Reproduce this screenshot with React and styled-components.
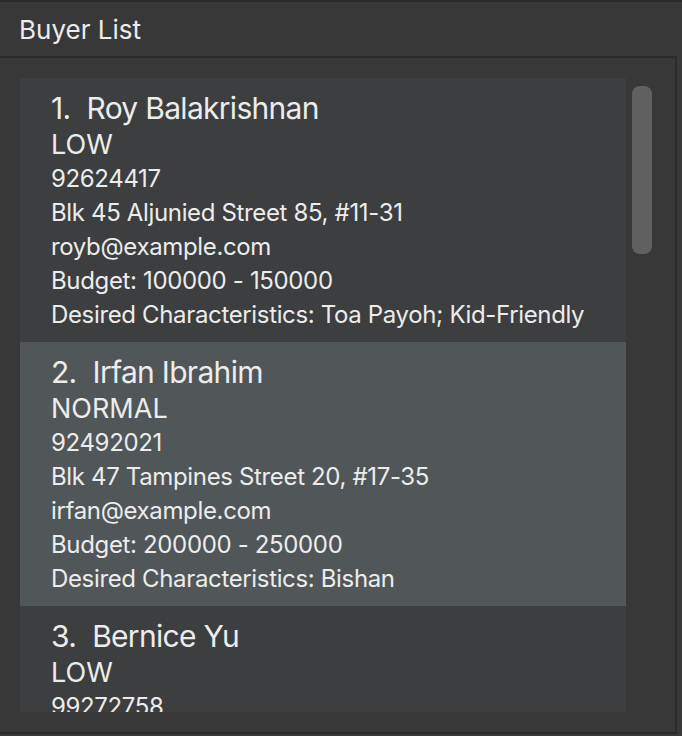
import styled, { createGlobalStyle } from "styled-components";

const GlobalStyle = createGlobalStyle`
  html, body {
    margin: 0;
    padding: 0;
    background: #383838;
  }
  body {
    font-family: Inter, "Noto Sans", sans-serif;
    color: #ececec;
  }
`;

const buyers = [
  {
    name: "Roy Balakrishnan",
    priority: "LOW",
    phone: "92624417",
    address: "Blk 45 Aljunied Street 85, #11-31",
    email: "royb@example.com",
    budget: "100000 - 150000",
    characteristics: "Toa Payoh; Kid-Friendly",
  },
  {
    name: "Irfan Ibrahim",
    priority: "NORMAL",
    phone: "92492021",
    address: "Blk 47 Tampines Street 20, #17-35",
    email: "irfan@example.com",
    budget: "200000 - 250000",
    characteristics: "Bishan",
  },
  {
    name: "Bernice Yu",
    priority: "LOW",
    phone: "99272758",
    address: "Blk 30 Lorong 3 Serangoon Gardens, #07-18",
    email: "berniceyu@example.com",
    budget: "300000 - 450000",
    characteristics: "Serangoon",
  },
];

const App = () => {
  return (
    <>
      <GlobalStyle />
      <Window>
        <Header>Buyer List</Header>
        <Panel>
          <Viewport>
            {buyers.map((buyer, index) => (
              <Card key={index} odd={index % 2 === 1}>
                <NameRow>
                  <span>{index + 1}.</span>
                  <span>{buyer.name}</span>
                </NameRow>
                <Priority>{buyer.priority}</Priority>
                <Detail>{buyer.phone}</Detail>
                <Detail>{buyer.address}</Detail>
                <Detail>{buyer.email}</Detail>
                <Detail>Budget: {buyer.budget}</Detail>
                <Detail>Desired Characteristics: {buyer.characteristics}</Detail>
              </Card>
            ))}
          </Viewport>
          <ScrollTrack>
            <ScrollThumb />
          </ScrollTrack>
        </Panel>
      </Window>
    </>
  );
};

export default App;

const Window = styled.div`
  border-top: 2px solid #2b2b2b;
  background: #383838;
`;

const Header = styled.div`
  height: 54px;
  display: flex;
  align-items: center;
  padding-left: 19px;
  padding-top: 1px;
  box-sizing: border-box;
  font-size: 26px;
  letter-spacing: 0;
  color: #ececec;
`;

const Panel = styled.div`
  width: 655px;
  display: flex;
  padding: 20px 0 20px 20px;
  border-top: 2px solid #2b2b2b;
  border-right: 2px solid #2b2b2b;
  border-bottom: 2px solid #2b2b2b;
`;

const Viewport = styled.div`
  width: 606px;
  height: 634px;
  overflow: hidden;
`;

const Card = styled.div`
  padding: 10px 31px;
  background: ${(props) => (props.odd ? "#515658" : "#3c3e3f")};
`;

const NameRow = styled.div`
  display: flex;
  gap: 16px;
  font-size: 30px;
  line-height: 40px;
  letter-spacing: -0.7px;
`;

const Priority = styled.div`
  font-size: 27px;
  line-height: 34px;
`;

const Detail = styled.div`
  font-size: 24px;
  line-height: 34px;
  letter-spacing: -0.35px;
  white-space: nowrap;
`;

const ScrollTrack = styled.div`
  width: 30px;
  padding: 8px 0 0 6px;
`;

const ScrollThumb = styled.div`
  width: 20px;
  height: 168px;
  border-radius: 8px;
  background: #606060;
`;
